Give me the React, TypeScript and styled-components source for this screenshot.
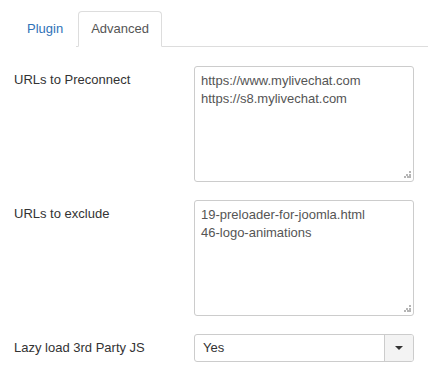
import React, { useState } from "react";
import styled, { createGlobalStyle } from "styled-components";

const GlobalStyle = createGlobalStyle`
  body {
    margin: 0;
    background: #fff;
    font-family: "Liberation Sans", Arial, sans-serif;
    font-size: 13px;
    color: #333;
  }
`;

const Page = styled.div`
  padding: 11px 14px 0 14px;
`;

const TabBar = styled.ul`
  display: flex;
  list-style: none;
  margin: 0 -14px 19px 0;
  padding: 0;
  border-bottom: 1px solid #ddd;
`;

const Tab = styled.li<{ $active?: boolean }>`
  margin-right: 2px;
  margin-bottom: -1px;
  padding: 8px 12px;
  line-height: 18px;
  border: 1px solid ${(p) => (p.$active ? "#ddd" : "transparent")};
  border-bottom-color: ${(p) => (p.$active ? "#fff" : "transparent")};
  border-radius: 4px 4px 0 0;
  background: #fff;
  color: ${(p) => (p.$active ? "#555" : "#2f72b8")};
  cursor: pointer;
`;

const Row = styled.div`
  display: grid;
  grid-template-columns: 180px 220px;
  margin-bottom: 18px;
`;

const Label = styled.label`
  padding-top: 5px;
  line-height: 18px;
  color: #333;
`;

const AreaWrap = styled.div`
  position: relative;
  height: 116px;
`;

const TextArea = styled.textarea`
  box-sizing: border-box;
  width: 100%;
  height: 100%;
  margin: 0;
  padding: 5px 6px;
  border: 1px solid #ccc;
  border-radius: 3px;
  font-family: "Liberation Sans", Arial, sans-serif;
  font-size: 13px;
  line-height: 18px;
  color: #555;
  resize: none;
  outline: none;
`;

const Grip = styled.svg`
  position: absolute;
  right: 3px;
  bottom: 4px;
`;

const Select = styled.div`
  display: flex;
  height: 28px;
  box-sizing: border-box;
  border: 1px solid #ccc;
  border-radius: 3px;
  overflow: hidden;
`;

const SelectValue = styled.div`
  flex: 1;
  padding: 0 8px;
  line-height: 26px;
  color: #333;
`;

const SelectButton = styled.div`
  width: 28px;
  display: flex;
  align-items: center;
  justify-content: center;
  border-left: 1px solid #ccc;
  background: #f3f3f3;
`;

const Caret = styled.span`
  width: 0;
  height: 0;
  border-left: 4px solid transparent;
  border-right: 4px solid transparent;
  border-top: 4px solid #333;
`;

const ResizeGrip = () => (
  <Grip width="7" height="7" viewBox="0 0 7 7">
    {[
      [5, 0],
      [2, 3],
      [5, 3],
      [0, 5],
      [3, 5],
      [5, 5],
    ].map(([x, y]) => (
      <rect key={`${x}-${y}`} x={x} y={y} width="2" height="2" fill="#b5b5b5" />
    ))}
  </Grip>
);

export default function App() {
  const [tab, setTab] = useState("advanced");

  return (
    <Page>
      <GlobalStyle />
      <TabBar>
        <Tab $active={tab === "plugin"} onClick={() => setTab("plugin")}>
          Plugin
        </Tab>
        <Tab $active={tab === "advanced"} onClick={() => setTab("advanced")}>
          Advanced
        </Tab>
      </TabBar>

      <Row>
        <Label>URLs to Preconnect</Label>
        <AreaWrap>
          <TextArea defaultValue={"https://www.mylivechat.com\nhttps://s8.mylivechat.com"} />
          <ResizeGrip />
        </AreaWrap>
      </Row>

      <Row>
        <Label>URLs to exclude</Label>
        <AreaWrap>
          <TextArea defaultValue={"19-preloader-for-joomla.html\n46-logo-animations"} />
          <ResizeGrip />
        </AreaWrap>
      </Row>

      <Row>
        <Label>Lazy load 3rd Party JS</Label>
        <Select>
          <SelectValue>Yes</SelectValue>
          <SelectButton>
            <Caret />
          </SelectButton>
        </Select>
      </Row>
    </Page>
  );
}
